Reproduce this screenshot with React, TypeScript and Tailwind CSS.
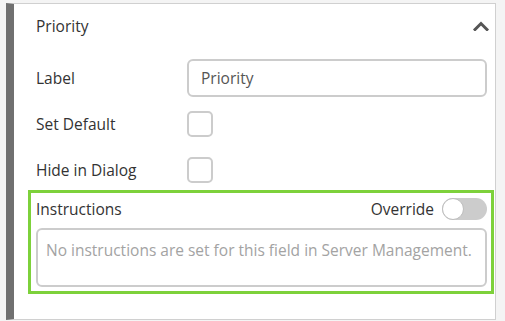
const ChevronUp = () => (
  <svg width="16" height="10" viewBox="0 0 16 10" className="text-[#555]">
    <polyline
      points="2,8.5 8,2.5 14,8.5"
      fill="none"
      stroke="currentColor"
      strokeWidth="3"
      strokeLinecap="square"
    />
  </svg>
);

const Checkbox = () => (
  <div className="h-[26px] w-[26px] rounded-[5px] border-2 border-[#cccccc] bg-white" />
);

const FieldRow = ({ label, children }: { label: string; children: React.ReactNode }) => (
  <div className="flex items-center pl-[22px] pr-[8px]">
    <span className="w-[151px] shrink-0 pt-[2px]">{label}</span>
    {children}
  </div>
);

export default function App() {
  return (
    <div
      className="h-[321px] w-[505px] overflow-hidden bg-[#f4f4f4] pl-[6px] pr-[9px] pt-[3px] text-[15.5px] text-[#333]"
      style={{ fontFamily: '"Open Sans", "Noto Sans", sans-serif' }}
    >
      <div className="flex h-[317px] flex-col border-y border-r border-l-[8px] border-y-[#d0d0d0] border-r-[#d0d0d0] border-l-[#707070] bg-white">
        <header className="flex h-[44px] shrink-0 items-center justify-between pl-[22px] pr-[6px]">
          <h1 className="pt-[2px] font-normal">Priority</h1>
          <ChevronUp />
        </header>

        <div className="mt-[11px]">
          <FieldRow label="Label">
            <div className="flex h-[38px] flex-1 items-center rounded-[6px] border-2 border-[#cccccc] px-[12px] pt-[2px] text-[#555]">
              Priority
            </div>
          </FieldRow>
        </div>

        <div className="mt-[14px]">
          <FieldRow label="Set Default">
            <Checkbox />
          </FieldRow>
        </div>

        <div className="mt-[20px]">
          <FieldRow label="Hide in Dialog">
            <Checkbox />
          </FieldRow>
        </div>

        <div className="ml-[14px] mr-[1px] mt-[7px] h-[104px] border-[3px] border-[#7dd13b] pb-[4px] pl-[5px] pr-[4px] pt-[5px]">
          <div className="flex h-[22px] items-center justify-between">
            <span className="pt-[2px]">Instructions</span>
            <div className="flex items-center gap-[8px]">
              <span className="pt-[2px]">Override</span>
              <div className="relative h-[22px] w-[45px] rounded-full bg-[#cccccc]">
                <div className="absolute left-0 top-0 h-[22px] w-[22px] rounded-full border border-[#bdbdbd] bg-white" />
              </div>
            </div>
          </div>
          <div className="mt-[8px] h-[59px] rounded-[6px] border-2 border-[#cccccc] px-[8px] pt-[9px] text-[#a3a3a3]">
            No instructions are set for this field in Server Management.
          </div>
        </div>
      </div>
    </div>
  );
}
